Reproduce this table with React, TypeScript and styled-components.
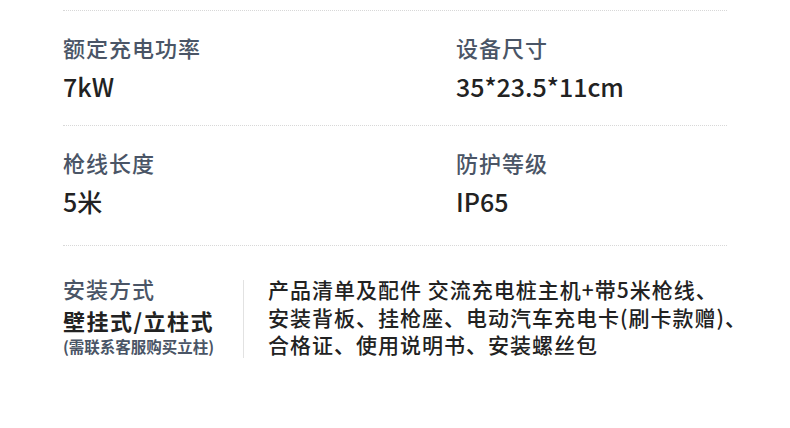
import { createGlobalStyle, styled } from "styled-components";

const GlobalStyle = createGlobalStyle`
  html, body {
    margin: 0;
    padding: 0;
    background: #fff;
  }
  body {
    font-family: "Noto Sans CJK SC", "Noto Sans", sans-serif;
    color: #222;
  }
`;

const Page = styled.div`
  width: 790px;
  height: 428px;
  padding: 10px 63px 0 63px;
  box-sizing: border-box;
`;

const Section = styled.section<{ $pb?: number }>`
  display: grid;
  grid-template-columns: 393px 1fr;
  border-top: 1px dotted #d8d8d8;
  width: 664px;
  padding: 21px 0 ${(p) => p.$pb ?? 23}px;
`;

const Spec = styled.div`
  display: flex;
  flex-direction: column;
  gap: 8px;
`;

const Label = styled.div`
  font-size: 22px;
  line-height: 30px;
  letter-spacing: 1px;
  font-weight: 500;
  color: #4a5566;
`;

const Value = styled.div`
  font-size: 25px;
  line-height: 32px;
  font-weight: 500;
  color: #222;
`;

const Install = styled.section`
  display: flex;
  align-items: flex-start;
  border-top: 1px dotted #d8d8d8;
  width: 664px;
  padding-top: 26px;
`;

const InstallMain = styled.div`
  display: flex;
  flex-direction: column;
  flex: none;
  width: 180px;
`;

const InstallLabel = styled(Label)`
  line-height: 32px;
`;

const InstallValue = styled.div`
  font-size: 22px;
  line-height: 32px;
  font-weight: 700;
  letter-spacing: 1.5px;
  color: #222;
`;

const Note = styled.div`
  font-size: 15.5px;
  line-height: 20px;
  font-weight: 700;
  color: #4a5566;
  white-space: nowrap;
`;

const Separator = styled.div`
  flex: none;
  width: 1px;
  height: 78px;
  margin: 8px 24px 0 0;
  background: #e2e2e2;
`;

const Package = styled.p`
  flex: none;
  margin: 4px 0 0;
  font-size: 21px;
  line-height: 27.5px;
  letter-spacing: 1px;
  font-weight: 500;
  white-space: nowrap;
  color: #222;
`;

const specs = [
  [
    { label: "额定充电功率", value: "7kW" },
    { label: "设备尺寸", value: "35*23.5*11cm" },
  ],
  [
    { label: "枪线长度", value: "5米" },
    { label: "防护等级", value: "IP65" },
  ],
];

export default function App() {
  return (
    <>
      <GlobalStyle />
      <Page>
        {specs.map((row, i) => (
          <Section key={i} $pb={i === 1 ? 28 : 23}>
            {row.map((s) => (
              <Spec key={s.label}>
                <Label>{s.label}</Label>
                <Value>{s.value}</Value>
              </Spec>
            ))}
          </Section>
        ))}
        <Install>
          <InstallMain>
            <InstallLabel>安装方式</InstallLabel>
            <InstallValue>壁挂式/立柱式</InstallValue>
            <Note>(需联系客服购买立柱)</Note>
          </InstallMain>
          <Separator />
          <Package>
            产品清单及配件 交流充电桩主机+带5米枪线、
            <br />
            安装背板、挂枪座、电动汽车充电卡(刷卡款赠)、
            <br />
            合格证、使用说明书、安装螺丝包
          </Package>
        </Install>
      </Page>
    </>
  );
}
